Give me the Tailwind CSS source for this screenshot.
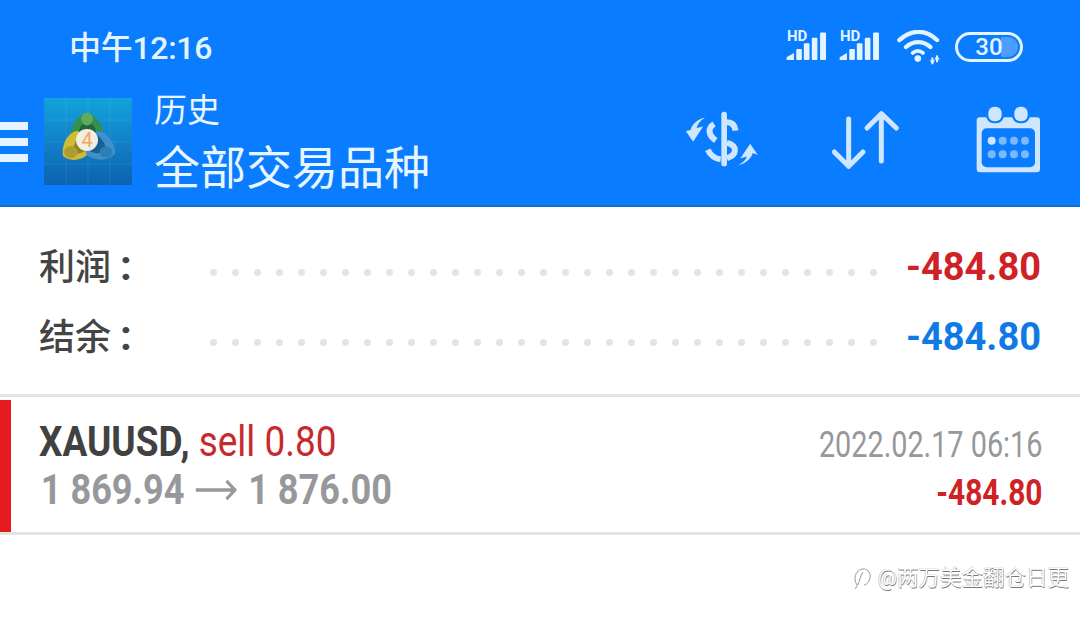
<!DOCTYPE html>
<html lang="zh">
<head>
    <meta charset="UTF-8">
    <title>历史</title>
    <script src="https://cdn.jsdelivr.net/npm/@tailwindcss/browser@4"></script>
</head>
<body class="w-[1080px] h-[618px] overflow-hidden bg-white font-['Roboto','Noto_Sans_CJK_SC',sans-serif]">
    <!-- Status bar + toolbar -->
    <header class="h-[207px] bg-[#0a7cff] border-b-2 border-[#0b6fd0] text-[#e3f3ff]">
        <div class="h-[93px] flex items-start justify-between pl-[69px] pr-[57px]">
            <span class="mt-[27px] text-[32px] leading-[42px] font-medium tracking-[-0.3px]">中午12:16</span>
            <div class="mt-[30px] flex items-start">
                <!-- signal 1 -->
                <div class="relative w-[43px] h-[32px]">
                    <span class="absolute left-[2px] top-0 text-[15px] leading-[13px] font-bold">HD</span>
                    <svg class="absolute left-0 top-0" width="43" height="32" viewBox="15 15 130 96" fill="currentColor">
                        <path d="M20 105V97L42 84V105Z"/>
                        <rect x="49" y="72" width="17" height="33" rx="3"/>
                        <rect x="72" y="55" width="17" height="50" rx="3"/>
                        <rect x="96" y="38" width="17" height="67" rx="3"/>
                        <rect x="121" y="22" width="18" height="83" rx="3"/>
                    </svg>
                </div>
                <!-- signal 2 -->
                <div class="relative w-[43px] h-[32px] ml-[10px]">
                    <span class="absolute left-[2px] top-0 text-[15px] leading-[13px] font-bold">HD</span>
                    <svg class="absolute left-0 top-0" width="43" height="32" viewBox="15 15 130 96" fill="currentColor">
                        <path d="M20 105V97L42 84V105Z"/>
                        <rect x="49" y="72" width="17" height="33" rx="3"/>
                        <rect x="72" y="55" width="17" height="50" rx="3"/>
                        <rect x="96" y="38" width="17" height="67" rx="3"/>
                        <rect x="121" y="22" width="18" height="83" rx="3"/>
                    </svg>
                </div>
                <!-- wifi -->
                <svg class="ml-[14px]" width="48" height="35" viewBox="345 15 145 105" fill="none" stroke="currentColor" stroke-width="13" stroke-linecap="round">
                    <path d="M358 45C395 12 438 12 472 45"/>
                    <path d="M378 66C400 46 430 46 452 66"/>
                    <path d="M398 84C408 76 420 76 430 84" stroke-width="11"/>
                    <circle cx="414" cy="101" r="10" fill="currentColor" stroke="none"/>
                    <path d="M458 98V118M472 92V112" stroke-width="6" stroke-linecap="butt"/>
                    <path d="M450 106L458 119L466 106ZM464 104L472 91L480 104Z" fill="currentColor" stroke="none"/>
                </svg>
                <!-- battery -->
                <div class="relative mt-[2px] ml-[12px] w-[68px] h-[30px] rounded-full border-[3px] border-[#e3f3ff] flex items-center justify-center">
                    <span class="absolute right-[2px] top-[2px] bottom-[2px] w-[17px] bg-[#4d9cff] rounded-r-full"></span>
                    <span class="relative text-[24px] leading-[24px] font-medium">30</span>
                </div>
            </div>
        </div>
        <div class="flex h-[112px] items-start">
            <!-- hamburger -->
            <div class="w-[28px] mt-[29px] flex flex-col gap-[8px] shrink-0">
                <span class="h-[8px] bg-[#e3f3ff]"></span>
                <span class="h-[8px] bg-[#e3f3ff]"></span>
                <span class="h-[8px] bg-[#e3f3ff]"></span>
            </div>
            <!-- logo -->
            <svg class="ml-[16px] mt-[5px] shrink-0" width="88" height="87" viewBox="0 0 88 87">
                <defs>
                    <linearGradient id="bg" x1="0.500" y1="0" x2="0.500" y2="1">
                        <stop offset="0" stop-color="#12a3dc"/>
                        <stop offset="0.500" stop-color="#1181c9"/>
                        <stop offset="1" stop-color="#0d62ae"/>
                    </linearGradient>
                </defs>
                <rect width="88" height="87" fill="url(#bg)"/>
                <path d="M0 22H88M0 44H88M0 66H88M22 0V87M44 0V87M66 0V87" stroke="#ffffff" stroke-opacity=".08"/>
                <path d="M43 15C52 16 62 30 59 42L27 42C24 30 34 16 43 15Z" fill="#358f52"/>
                <path d="M33 33C41 34 45 49 44 56C36 64 24 63 19 58C17 47 24 34 33 33Z" fill="#cfbb35"/>
                <path d="M55 33C64 35 72 47 71 56C62 64 50 63 42 56C41 47 47 35 55 33Z" fill="#3f92c9"/>
                <path d="M36 36C41 39 42 48 41 53C37 56 32 56 29 54C30 47 32 40 36 36Z" fill="#8f8126"/>
                <path d="M52 36C58 40 62 47 62 52C58 56 50 56 46 53C46 47 48 40 52 36Z" fill="#185f95"/>
                <path d="M43 23C48 25 52 30 52 34L35 34C35 30 38 25 43 23Z" fill="#22683a"/>
                <ellipse cx="43" cy="21" rx="6" ry="6.500" fill="#5cab5f"/>
                <ellipse cx="27" cy="54" rx="7" ry="6" fill="#ad9d30"/>
                <ellipse cx="62" cy="54" rx="6.500" ry="5.500" fill="#2a7fb3"/>
                <circle cx="43" cy="42" r="11" fill="#f3eee4"/>
                <text x="43" y="49" text-anchor="middle" font-size="20" font-weight="400" fill="#f2a65a">4</text>
            </svg>
            <!-- title -->
            <div class="ml-[22px] text-[#e8f6ff]">
                <div class="text-[33px] leading-[36px]">历史</div>
                <div class="mt-[14px] text-[46px] leading-[50px]">全部交易品种</div>
            </div>
            <!-- actions -->
            <div class="ml-auto flex items-start text-[#cfe6ff]">
                <!-- dollar exchange -->
                <svg class="mt-[17px]" width="78" height="58" viewBox="40 300 234 175" fill="none" stroke="currentColor" stroke-width="18">
                    <rect x="155" y="305" width="17" height="165" rx="8" fill="currentColor" stroke="none"/>
                    <path d="M172 337C190 337 196 347 198 362"/>
                    <path d="M133 342C114 354 114 375 138 392"/>
                    <path d="M172 399C204 407 204 435 172 445"/>
                    <path d="M114 420C122 436 135 447 153 449"/>
                    <path d="M106 323C84 328 68 342 62 360L48 364L70 396L100 350L80 354C84 342 92 332 106 323Z" fill="currentColor" stroke="none"/>
                    <path d="M206 467C228 462 244 448 250 430L265 436L242 402L212 446L232 440C228 452 220 458 206 467Z" fill="currentColor" stroke="none"/>
                </svg>
                <!-- sort -->
                <svg class="ml-[66px] mt-[15px]" width="77" height="63" viewBox="470 295 231 189" fill="none" stroke="currentColor" stroke-width="15" stroke-linecap="round" stroke-linejoin="round">
                    <path d="M535 328V470M492 427L535 470L578 427"/>
                    <path d="M633 312V454M590 355L633 312L678 355"/>
                </svg>
                <!-- calendar -->
                <svg class="ml-[71px] mr-[38px] mt-[12px]" width="67" height="69" viewBox="915 285 201 207" fill="currentColor">
                    <rect x="920" y="322" width="190" height="165" rx="10"/>
                    <rect x="948" y="284" width="54" height="56" rx="24" fill="#0a7cff"/>
                    <rect x="1026" y="284" width="54" height="56" rx="24" fill="#0a7cff"/>
                    <rect x="955" y="290" width="40" height="44" rx="18"/>
                    <rect x="1033" y="290" width="40" height="44" rx="18"/>
                    <rect x="935" y="355" width="160" height="117" rx="15" fill="#0a7cff"/>
                    <circle cx="965" cy="392" r="12"/>
                    <g fill="#7db8fb">
                        <circle cx="998" cy="392" r="12"/><circle cx="1032" cy="392" r="12"/><circle cx="1065" cy="392" r="12"/>
                        <circle cx="965" cy="433" r="12"/><circle cx="998" cy="433" r="12"/><circle cx="1032" cy="433" r="12"/><circle cx="1065" cy="433" r="12"/>
                    </g>
                </svg>
            </div>
        </div>
    </header>

    <!-- Summary -->
    <section class="pl-[39px] pr-[39px] pt-[25px] h-[190px] border-b-[3px] border-[#e4e4e4]">
        <div class="flex items-center h-[70px]">
            <span class="w-[171px] text-[36px] leading-[70px] font-medium text-[#444444]">利润<span class="ml-[9px] text-[42px] font-bold">:</span></span>
            <div class="flex-1 flex gap-[15px] items-center mt-[11px] h-[7px]" id="dots1">
                <i class="size-[7px] shrink-0 rounded-full bg-[#e4e4e6]"></i>
            </div>
            <span class="text-[38px] font-bold text-[#cf2226] ml-[24px]">-484.80</span>
        </div>
        <div class="flex items-center h-[70px]">
            <span class="w-[171px] text-[36px] leading-[70px] font-medium text-[#444444]">结余<span class="ml-[9px] text-[42px] font-bold">:</span></span>
            <div class="flex-1 flex gap-[15px] items-center mt-[11px] h-[7px]" id="dots2">
                <i class="size-[7px] shrink-0 rounded-full bg-[#e4e4e6]"></i>
            </div>
            <span class="text-[38px] font-bold text-[#0f7ae5] ml-[24px]">-484.80</span>
        </div>
    </section>

    <!-- Deal row -->
    <section class="flex h-[135px] border-b-[3px] border-[#e4e4e4] mt-[3px]">
        <div class="w-[11px] h-[132px] bg-[#e31b1f]"></div>
        <div class="flex-1 flex justify-between pl-[28px] pr-[38px]">
            <div class="pt-[18px] whitespace-nowrap">
                <div class="origin-left scale-x-[0.88] text-[42px] leading-[48px]"><span class="font-bold text-[#414141]">XAUUSD,</span> <span class="text-[#c62a2c]">sell 0.80</span></div>
                <div class="origin-left scale-x-[0.86] flex items-center text-[42px] leading-[48px] font-bold text-[#96989c]">
                    <span class="ml-[2px]">1 869.94</span>
                    <svg class="mx-[13px]" width="48" height="20" viewBox="0 0 48 20" fill="none" stroke="currentColor" stroke-width="3.500">
                        <path d="M0 10H46M36 1L46 10L36 19"/>
                    </svg>
                    <span>1 876.00</span>
                </div>
            </div>
            <div class="pt-[23px] text-right whitespace-nowrap">
                <div class="origin-right scale-x-[0.80] text-[36px] leading-[44px] text-[#96989c]">2022.02.17 06:16</div>
                <div class="origin-right scale-x-[0.83] mt-[4px] text-[36px] leading-[44px] font-bold text-[#cf2226]">-484.80</div>
            </div>
        </div>
    </section>

    <!-- Watermark -->
    <div class="flex justify-end items-center pr-[11px] mt-[28px] text-[21.500px] leading-[30px] text-white [text-shadow:0.5px_0.5px_0_#777,-0.5px_-0.5px_0_#aaa]">
        <svg width="20" height="24" viewBox="0 0 20 24" fill="none" stroke="#999" stroke-width="1" class="mr-[6px]">
            <path d="M5 19C1 13 3 5 10 3C17 2 20 9 17 15C16 17 14 19 12 19M11 6C8 10 8 15 6 18C5 20 4 22 3 23"/>
        </svg>
        <span>@两万美金翻仓日更</span>
    </div>

    <script>
        // fill in the dotted leaders
        ['dots1', 'dots2'].forEach(id => {
            const row = document.getElementById(id);
            const dot = row.firstElementChild;
            for (let i = 0; i < 30; i++) row.appendChild(dot.cloneNode());
        });
    </script>
</body>
</html>
